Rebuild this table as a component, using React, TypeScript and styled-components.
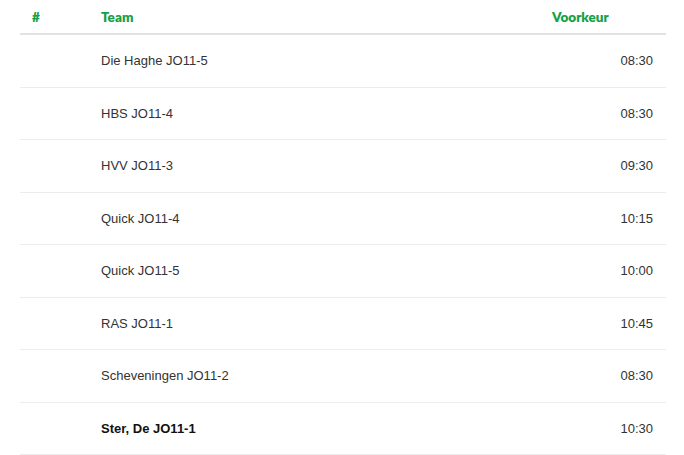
import React from 'react';
import styled, { createGlobalStyle } from 'styled-components';

const GlobalStyle = createGlobalStyle`
  body {
    margin: 0;
    background: #ffffff;
    font-family: "Liberation Sans", Arial, Helvetica, sans-serif;
  }
`;

const Table = styled.div`
  width: 646px;
  margin: 0 18px 0 20px;
`;

const HeadRow = styled.div`
  display: grid;
  grid-template-columns: 81px 1fr 114px;
  align-items: center;
  height: 33px;
  border-bottom: 2px solid #e2e2e2;
  font-family: Lato, "Open Sans", sans-serif;
  font-weight: 800;
  font-size: 13.5px;
  color: #17a047;
`;

const HeadCell = styled.div<{ $pad?: number }>`
  padding-left: ${(p) => p.$pad ?? 0}px;
`;

const Row = styled.div`
  display: grid;
  grid-template-columns: 81px 1fr 114px;
  align-items: center;
  height: 51.5px;
  border-bottom: 1px solid #ececec;
  font-size: 13px;
  color: #333333;
`;

const TeamCell = styled.div<{ $own?: boolean }>`
  font-weight: ${(p) => (p.$own ? 700 : 400)};
  color: ${(p) => (p.$own ? '#111111' : '#333333')};
`;

const TimeCell = styled.div`
  text-align: right;
  padding-right: 13px;
`;

type Entry = { team: string; time: string; own?: boolean };

const entries: Entry[] = [
  { team: 'Die Haghe JO11-5', time: '08:30' },
  { team: 'HBS JO11-4', time: '08:30' },
  { team: 'HVV JO11-3', time: '09:30' },
  { team: 'Quick JO11-4', time: '10:15' },
  { team: 'Quick JO11-5', time: '10:00' },
  { team: 'RAS JO11-1', time: '10:45' },
  { team: 'Scheveningen JO11-2', time: '08:30' },
  { team: 'Ster, De JO11-1', time: '10:30', own: true },
];

function App() {
  return (
    <>
      <GlobalStyle />
      <Table>
        <HeadRow>
          <HeadCell $pad={12}>#</HeadCell>
          <HeadCell>Team</HeadCell>
          <HeadCell>Voorkeur</HeadCell>
        </HeadRow>
        {entries.map((e) => (
          <Row key={e.team}>
            <div />
            <TeamCell $own={e.own}>{e.team}</TeamCell>
            <TimeCell>{e.time}</TimeCell>
          </Row>
        ))}
      </Table>
    </>
  );
}

export default App;
